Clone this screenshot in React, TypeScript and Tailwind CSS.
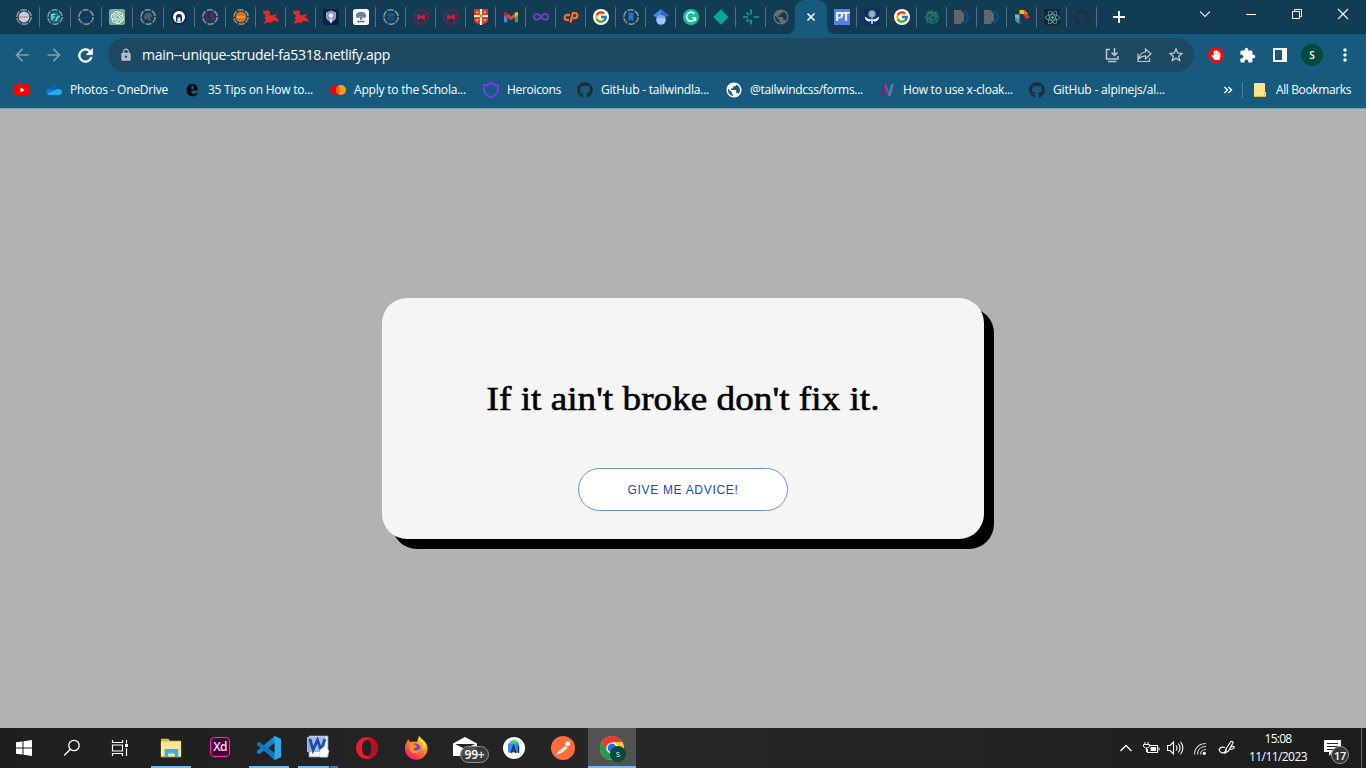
import React, { useLayoutEffect, useRef, useState } from "react";
import { FaGithub, FaReact, FaHandPaper } from "react-icons/fa";
import { FcGoogle } from "react-icons/fc";
import { SiOpenai } from "react-icons/si";
import { MdExtension, MdLock, MdArrowBack, MdArrowForward, MdStarBorder, MdMoreVert, MdPublic } from "react-icons/md";

/** A single line of text fitted to the given width, by letter spacing or by stretching the glyphs. */
function FitText({ text, width, stretch = false, className = "" }: { text: string; width: number; stretch?: boolean; className?: string }) {
  const ref = useRef<HTMLSpanElement>(null);
  const [natural, setNatural] = useState(0);
  useLayoutEffect(() => {
    if (ref.current) setNatural(ref.current.getBoundingClientRect().width);
  }, [text]);
  const style: React.CSSProperties = natural
    ? stretch
      ? { transform: `scaleX(${width / natural})` }
      : { letterSpacing: (width - natural) / text.length }
    : {};
  return (
    <span ref={ref} className={"inline-block whitespace-pre " + className} style={style}>
      {text}
    </span>
  );
}

type IconProps = { children: React.ReactNode; size?: number; box?: number; className?: string };
function Icon({ children, size = 16, box = 16, className = "" }: IconProps) {
  return (
    <svg width={size} height={size} viewBox={`0 0 ${box} ${box}`} fill="none" className={"block shrink-0 " + className}>
      {children}
    </svg>
  );
}

/** Favicon inside the dashed ring of a tab that is waiting to load. */
function Pending({ children }: { children: React.ReactNode }) {
  return (
    <Icon>
      <circle cx="8" cy="8" r="7.2" stroke="#8b979f" strokeWidth="1.5" strokeDasharray="6.2 1.34" />
      {children}
    </Icon>
  );
}

const Runner = () => (
  <Icon>
    <path d="M0 1.500 2.500 2 5 1 7 3 6.500 5.500 9 6.500 15 4.500 11.500 8 14.500 9.500 16 13 10.500 11.500 9 13.500 4 13.500 0 15 3 11 1.500 9 3 7 .5 4.500Z" fill="#e02d2a" />
  </Icon>
);
const RedSeal = () => (
  <Icon>
    <circle cx="8" cy="8" r="7.3" stroke="#8a1f3a" strokeWidth="1" />
    <circle cx="8" cy="8" r="5.8" stroke="#5b2340" strokeWidth="0.9" />
    <path d="M4 5.500h2.500v1.300h3V5.500H12v5H9.500V9.200h-3v1.300H4Z" fill="#d5173a" />
  </Icon>
);
const Bracket = () => (
  <Icon>
    <path d="M0 1h6.500L10 4.500v7L6.500 15H0Z" fill="#626569" />
    <path d="M10.500 1.500 14.500 8l-4 6.500" stroke="#0d4f92" strokeWidth="1.800" />
  </Icon>
);
const GoogleDot = () => (
  <span className="grid size-4 place-items-center rounded-full bg-white">
    <FcGoogle size={14} />
  </span>
);

const leadingTabs: React.ReactNode[] = [
  <Pending><circle cx="8" cy="8" r="5.4" fill="#ccd0d6" /><path d="M3.5 8h9" stroke="#cc6674" strokeWidth="1.6" strokeDasharray="1.5 .7" /></Pending>,
  <Pending><circle cx="8" cy="8" r="5.3" fill="#078487" /><path d="M5 11V5.500h3M5 8h2.500M9 12c0-3 1-4 3.500-5" stroke="#bce3df" strokeWidth="1.1" /></Pending>,
  <Pending><path d="M4 11c1-5 2.500-6 4-6s3 1 4 6L8 8.500Z" fill="#0b4373" /></Pending>,
  <span className="grid size-4 place-items-center rounded-[2px] bg-[#74aa9c] text-white"><SiOpenai size={13} /></span>,
  <Pending><path d="M4 8c0-3 3-5 6-4l2.500 2.500L12 8l-2-.5 1 4.500-3-1V9L5 11Z" fill="#5a5d61" /></Pending>,
  <Icon><circle cx="8" cy="8" r="8" fill="#09265f" /><circle cx="8" cy="8" r="6" fill="#fff" /><path d="M5 12.500V8a3 3 0 0 1 6 0v4.500Z" fill="#0c2b60" /><path d="M6.500 8.500h3v4h-3Z" fill="#fff" /></Icon>,
  <Pending><path d="M4.500 4v7h3M11 5.200c-3-1.500-3.500 2-1 2.500s2 4-1.500 2.800M9 11l1.800-6L12.500 11" stroke="#8b1c51" strokeWidth="1.1" /></Pending>,
  <Pending><circle cx="8" cy="8" r="5.400" fill="#e5700b" /><path d="M4 8h8" stroke="#edc28d" strokeWidth="1.600" strokeDasharray="1.300 .6" /></Pending>,
  <Runner />,
  <Runner />,
  <Icon><rect width="16" height="16" fill="#08204d" /><path d="M3 3.500 8 1.500l5 2v5c0 2-3 3-5 6-2-3-5-4-5-6Z" fill="#9ba9bc" /><circle cx="8" cy="6.500" r="3" fill="#e7ecf1" stroke="#4c648a" strokeWidth=".8" /><path d="M8 9.500v4" stroke="#f3f5f7" strokeWidth="1.500" /></Icon>,
  <Icon><rect width="16" height="16" rx="2.500" fill="#f9fafb" /><path d="M3 7c0-3 2-4 5-4s5 1 5 4c0 2-2 2-4 1.500v2.200H7V8.500C5 9 3 9 3 7Z" fill="#66779a" /><path d="M4.500 5.500h7M5 7.500h6" stroke="#8d9bb5" strokeWidth=".6" /><path d="M4.500 12.600h7" stroke="#34486f" strokeWidth="1.500" strokeDasharray="1.500 .4" /></Icon>,
  <Pending><path d="M4 7c1-3 7-3 8 0M4 9h8M5 11h6M6 5.500l1 2 2-2 1 2" stroke="#275b91" strokeWidth="1.100" /></Pending>,
  <RedSeal />,
  <RedSeal />,
  <Icon><path d="M1 0h14v11c0 3-4 4-7 5-3-1-7-2-7-5Z" fill="#d33b29" /><path d="M8 0v16M1 7h14" stroke="#f8efe0" strokeWidth="2.200" /><path d="M3.200 2.200h2v2h-2ZM10.800 2.200h2v2h-2ZM3.200 10h2v2h-2ZM10.800 10h2v2h-2Z" fill="#f8c03d" /><path d="M6.500 5.500h3v3h-3Z" fill="#e88b31" /></Icon>,
  <Icon><path d="M1 4v9.300h3.300V6Z" fill="#4285f4" /><path d="M11.700 6v7.300H15V4Z" fill="#34a853" /><path d="M4.300 4.500 8 7.300l3.700-2.800v4L8 11.300 4.300 8.500Z" fill="#ea4335" /><path d="M1 4.500C1 2.500 3 2.500 4.300 4v4.500L1 6.200Z" fill="#c5221f" /><path d="M11.700 4C13 2.500 15 2.500 15 4.500v1.700l-3.300 2.300Z" fill="#fbbc04" /></Icon>,
  <Icon><path d="M8 8C6 5.500 5 4.800 3.900 4.800a3 3 0 0 0 0 6C5 10.800 6 10 8 7.800s3-3 4.100-3a3 3 0 0 1 0 6C11 10.800 10 10 8 8Z" stroke="#7340c4" strokeWidth="1.800" /></Icon>,
  <Icon><path d="M7 6H4a2.300 2.300 0 0 0 0 4.800h2" stroke="#ff6c2c" strokeWidth="2.300" /><path d="m7.500 13.500 2.400-9.300h2.300c3.500 0 2.500 5-.8 5H10" stroke="#ff6c2c" strokeWidth="2.300" /></Icon>,
  <GoogleDot />,
  <Pending><path d="M5.500 3.500h5v9L8 10.500l-2.500 2Z" fill="#2d6fce" /></Pending>,
  <Icon><path d="M8 0 0 6.500 8 11Z" fill="#4285f4" /><path d="m8 0 8 6.500L8 11Z" fill="#356ac3" /><circle cx="8" cy="11" r="4.800" fill="#a0c3ff" /><path d="M3.500 9C5 5.500 11 5.500 12.500 9Z" fill="#76a7fa" /></Icon>,
  <Icon><circle cx="8" cy="8" r="8" fill="#13c296" /><path d="M11.500 4.800A4.500 4.500 0 1 0 12.400 9H9.200M12.400 9v3" stroke="#fff" strokeWidth="1.500" /></Icon>,
  <Icon><path d="m8 .3 7.700 7.700L8 15.700.3 8Z" fill="#05a6a0" /></Icon>,
  <Icon><path d="M8 .5v4.700M8 10.800v4.700M0 8h5M10.500 8H16M3.500 12.500 5.800 10.200M3.500 3.500l2.300 2.300" stroke="#05a99f" strokeWidth="1.700" /></Icon>,
  <MdPublic size={18} className="-ml-px text-[#6a6d71]" />,
];

const trailingTabs: React.ReactNode[] = [
  <span className="grid size-4 place-items-center bg-[#557fe7] text-[12px] leading-4 font-bold tracking-[-1px] text-white [font-family:'Liberation_Sans',sans-serif]">PT</span>,
  <Icon><rect width="16" height="16" rx="1" fill="#09315f" /><circle cx="8" cy="5" r="3.800" fill="#7f98b4" /><path d="M5.500 4.500h5M6 6.500h4M8 2v8" stroke="#b6c4d2" strokeWidth=".8" /><path d="M.8 7.500c0 3 2 5 5.200 5l2-1.700 2 1.700c3.200 0 5.200-2 5.200-5l-4 2.500L8 10.500 4.800 10Z" fill="#e8eef4" /><path d="M8 10v5" stroke="#e8eef4" strokeWidth="1.500" /></Icon>,
  <GoogleDot />,
  <Icon><circle cx="8" cy="8" r="7.400" fill="#154c5c" /><path d="M2 5c5-5 10 0 12 4M1 9C5 2 10 3 14 6M2 12C7 5 11 6 15 9M5 14C7 9 12 9 14 12M4 3c6 2 9 5 8 11M9 1c-6 3-7 8-5 13M13 3C7 4 5 9 8 15" stroke="#2b8a50" strokeWidth=".75" /><path d="M1 8c4 0 7 3 9 7M2 11c4 0 5 1 7 4" stroke="#2b67ae" strokeWidth=".8" /></Icon>,
  <Bracket />,
  <Bracket />,
  <Icon><path d="M5.500 1h5v4h-5Z" fill="#fbbc04" /><path d="M10.500 1 16 8.500 12 10l-3-5h1.500Z" fill="#ed2d25" /><path d="M1 5.500h4.500V11L1 8.500Z" fill="#60c7bb" /><path d="M1 9l4.500 2v4L1.500 12Z" fill="#3fa5b4" /><path d="M5.500 11 9 14.500H5.500Z" fill="#851b9b" /><path d="M10.500 1 14 5h-3.500Z" fill="#ff8915" /></Icon>,
  <span className="grid size-4 place-items-center rounded-[2px] bg-[#222427] text-[#55bdd2]"><FaReact size={15} /></span>,
  <FaGithub size={16} className="text-[#22303a]" />,
];

function TabStrip() {
  return (
    <div className="flex h-[34px] bg-[#123b54] pl-[9px]">
      {leadingTabs.map((icon, i) => (
        <div key={i} className={"flex h-[34px] shrink-0 items-center pl-[7px] " + (i < 7 ? "w-[31px]" : "w-[30px]")}>
          {icon}
          {i < leadingTabs.length - 1 && <span className="ml-auto h-5 w-px bg-[#50707f]" />}
        </div>
      ))}
      <div className="relative -ml-px grid w-8 shrink-0 place-items-center rounded-t-[9px] bg-[#175a7e] text-white">
        <Icon size={10} box={10}><path d="m1.500 1.500 7 7M8.500 1.500l-7 7" stroke="#fff" strokeWidth="1.600" /></Icon>
        <Icon size={8} box={8} className="absolute bottom-0 -left-2"><path d="M8 0v8H0a8 8 0 0 0 8-8Z" fill="#175a7e" /></Icon>
        <Icon size={8} box={8} className="absolute -right-2 bottom-0"><path d="M0 0v8h8a8 8 0 0 1-8-8Z" fill="#175a7e" /></Icon>
      </div>
      {trailingTabs.map((icon, i) => (
        <div key={i} className="flex h-[34px] w-[30px] shrink-0 items-center pl-[7px]">
          {icon}
          <span className="ml-auto h-5 w-px bg-[#50707f]" />
        </div>
      ))}
      <div className="ml-3 flex items-center text-white">
        <Icon size={20} box={20}><path d="M10 4v12M4 10h12" stroke="#fff" strokeWidth="2" /></Icon>
      </div>
      <div className="ml-auto flex h-[28px] items-center">
        <div className="grid w-[46px] place-items-center"><Icon size={12} box={12}><path d="M1 3.500 6 8.500l5-5" stroke="#dce5ea" strokeWidth="1.100" /></Icon></div>
        <div className="grid w-[46px] place-items-center"><Icon size={12} box={12}><path d="M1 6.500h10" stroke="#fff" /></Icon></div>
        <div className="grid w-[46px] place-items-center"><Icon size={12} box={12}><path d="M1.500 3.500h7v7h-7ZM3.500 3.500v-2h7v7h-2" stroke="#fff" /></Icon></div>
        <div className="grid w-[46px] place-items-center"><Icon size={12} box={12}><path d="m1 1 10 10M11 1 1 11" stroke="#fff" strokeWidth="1.100" /></Icon></div>
      </div>
    </div>
  );
}

function Toolbar() {
  return (
    <div className="flex h-[42px] items-center pl-3">
      <MdArrowBack size={20} className="shrink-0 text-[#7d9fb3]" />
      <MdArrowForward size={20} className="ml-3 shrink-0 text-[#7d9fb3]" />
      <Icon size={21} box={24} className="ml-[11px]">
        <path d="M17.650 6.350A8 8 0 1 0 19.730 14h-2.080A6 6 0 1 1 16.220 7.780L13 11h7V4Z" fill="#fff" stroke="#fff" strokeWidth=".7" />
      </Icon>
      <div className="ml-[12px] flex h-[34px] w-[1086px] shrink-0 items-center rounded-full bg-[#1c4961] pr-[9px] pl-[11px]">
        <MdLock size={14} className="text-[#b8bec5]" />
        <FitText text="main--unique-strudel-fa5318.netlify.app" width={248} className="ml-[9px] pb-px text-[14px] text-white" />
        <div className="ml-auto flex items-center gap-[14px]">
          <Icon size={18} box={18}><path d="M7 3.500H3.500v9.500h11.500v-3M11.500 2v7M8.500 6.500l3 3 3-3M5 15.500h8.500" stroke="#bdc8ce" strokeWidth="1.500" /></Icon>
          <Icon size={18} box={18}><path d="M3 7.500v8h11.500v-3.500M10.500 3v3C6.500 6.500 4.500 9 4 12.500c2-2 4-2.700 6.500-2.700v3l5.500-5Z" stroke="#bdc8ce" strokeWidth="1.200" /></Icon>
          <MdStarBorder size={18} className="text-[#c5ced3]" />
        </div>
      </div>
      <div className="ml-[14px] grid size-4 shrink-0 place-items-center rounded-full bg-[#ec1010]"><FaHandPaper size={10} className="text-white" /></div>
      <MdExtension size={17} className="ml-[15px] shrink-0 text-white" />
      <Icon size={14} box={14} className="ml-[17px]"><path d="M1 1h12v12H1Z" stroke="#fff" strokeWidth="2" /><path d="M9 1h4v12H9Z" fill="#fff" /></Icon>
      <div className="ml-[14px] grid size-[22px] shrink-0 place-items-center rounded-full bg-[#044b3e] text-[10px] leading-none font-semibold text-white">S</div>
      <MdMoreVert size={20} className="ml-[12px] shrink-0 text-white" />
    </div>
  );
}

const Octocat = () => <FaGithub size={16} className="shrink-0 text-[#232b32]" />;

const bookmarks: { icon: React.ReactNode; label: string; text: number; width: string }[] = [
  { icon: <Icon><rect y="2.300" width="16" height="11.400" rx="3" fill="#f00" /><path d="M6.500 5.500v5L10.700 8Z" fill="#fff" /></Icon>, label: "", text: 0, width: "w-[32px]" },
  { icon: <Icon><path d="M3.500 7a4.300 4.300 0 0 1 8-1.500L15 11H3Z" fill="#0364b8" /><path d="M0 10a3.500 3.500 0 0 1 5-3.200L12 13H3.500A3.200 3.200 0 0 1 0 10Z" fill="#0b78d4" /><path d="M12 7a3.300 3.300 0 0 1 4 4 2.600 2.600 0 0 1-2.500 2H3.500a3.400 3.400 0 0 1-2.500-1L8.500 8Z" fill="#28a8ea" /></Icon>, label: "Photos - OneDrive", text: 98, width: "w-[138px]" },
  { icon: <Icon><path fillRule="evenodd" d="M8.500 2C4.500 2 2.500 4.800 2.500 8.300c0 3.700 2.400 6 5.800 6 2.600 0 4.300-1.300 5.200-3.400l-1-.5c-.6 1.200-1.500 1.800-2.700 1.800-1.800 0-2.600-1.500-2.600-3.700h6.600C13.800 4.700 12 2 8.500 2ZM7.300 7.200C7.300 4.800 7.600 3.300 8.500 3.300s1.200 1.500 1.200 3.900Z" fill="#07090b" /></Icon>, label: "35 Tips on How to...", text: 105, width: "w-[146px]" },
  { icon: <Icon><circle cx="5" cy="8" r="5" fill="#eb001b" /><circle cx="11" cy="8" r="5" fill="#f79e1b" /><path d="M8 4a5 5 0 0 1 0 8 5 5 0 0 1 0-8Z" fill="#ff5f00" /></Icon>, label: "Apply to the Schola...", text: 112, width: "w-[153px]" },
  { icon: <Icon><path d="M8 1C6 2.800 3.500 3.300 1 3.300v3.200C1 11 4 14 8 15.200c4-1.200 7-4.200 7-8.700V3.300C12.500 3.300 10 2.800 8 1Z" stroke="#7c3aed" strokeWidth="1.700" /></Icon>, label: "Heroicons", text: 54, width: "w-[94px]" },
  { icon: <Octocat />, label: "GitHub - tailwindla...", text: 108, width: "w-[149px]" },
  { icon: <MdPublic size={18} className="-mx-px shrink-0 text-white" />, label: "@tailwindcss/forms...", text: 113, width: "w-[153px]" },
  { icon: <Icon><path d="M2.500 14 6 2.500" stroke="#8c1f60" strokeWidth="2.400" /><path d="m6 2.500 4.500 11.300" stroke="#7a5582" strokeWidth="2.400" /><path d="M10.500 13.500 13.500 2" stroke="#5e7eb5" strokeWidth="2.400" /></Icon>, label: "How to use x-cloak...", text: 110, width: "w-[150px]" },
  { icon: <Octocat />, label: "GitHub - alpinejs/al...", text: 112, width: "w-[150px]" },
];

function BookmarksBar() {
  return (
    <div className="flex h-8 items-center pb-[4px] pl-[14px] text-[12px] leading-4 text-white">
      {bookmarks.map((b, i) => (
        <div key={i} className={"flex shrink-0 items-center gap-2 " + b.width}>
          {b.icon}
          {b.label && <FitText text={b.label} width={b.text} />}
        </div>
      ))}
      <Icon size={10} box={10} className="ml-[44px]"><path d="m1.500 2 3 3-3 3M5.500 2l3 3-3 3" stroke="#fff" strokeWidth="1.400" /></Icon>
      <span className="ml-[9px] h-4 w-px bg-[#4d7f9b]" />
      <Icon className="ml-[10px]"><path d="M1 2a1 1 0 0 1 1-1h9a1 1 0 0 1 1 1v8h1v4l-1 1H1Z" fill="#ffe38d" /><path d="M1 14.500h10.500v-4" stroke="#e9bc3c" /></Icon>
      <FitText text="All Bookmarks" width={75} className="ml-[7px]" />
    </div>
  );
}

function AdviceCard() {
  return (
    <main className="flex h-[619px] flex-col items-center bg-[#b2b2b2] pt-[189px]">
      <section className="flex h-[241px] w-[602px] flex-col items-center rounded-[25px] bg-[#f5f5f5] pt-[76px] shadow-[10px_10px_0_#000]">
        <h1 className="h-[48px] text-[34.5px] leading-[48px] text-black [-webkit-text-stroke:0.6px_#000] [font-family:'Liberation_Serif',serif]">
          <FitText text="If it ain't broke don't fix it." width={393} stretch />
        </h1>
        <button className="mt-[46px] h-[43px] w-[210px] rounded-full border border-[#6a91d0] bg-white text-[12px] text-[#174ca8] [font-family:'Liberation_Sans',sans-serif]">
          <FitText text="GIVE ME ADVICE!" width={111} />
        </button>
      </section>
    </main>
  );
}

const apps: { icon: React.ReactNode; bar?: "full" | "inset" | "split" }[] = [
  { bar: "inset", icon: <Icon size={22} box={24}><path d="M1 2h8l2 2h12v18H1Z" fill="#e9b33c" /><path d="M1 5h22v16H1Z" fill="#ffe49a" /><path d="M5 13h15v9h-4v-4H9v4H5Z" fill="#36afe6" /></Icon> },
  { icon: <span className="mb-[3px] grid size-5 place-items-center rounded-[4px] border border-[#ff2bc2] bg-[#450135] text-[12px] leading-none font-semibold tracking-[-0.7px] text-[#ffd9f5]">Xd</span> },
  { bar: "inset", icon: <VscodeMark /> },
  { bar: "split", icon: <Icon size={24} box={24} className="-mt-0.5"><path d="M3 1h19v21H3Z" fill="#f0f4fb" /><path d="M1 2h18v15H1Z" fill="#9dbde6" /><path d="M3 1h19v21H3Z" stroke="#7396cc" strokeWidth=".8" /><path d="m4 4 3 11 4.500-10L15 15l4-11" stroke="#1b4fa6" strokeWidth="2.800" /><path d="m14 15 5-4 4 5-2 6h-7Z" fill="#fff" stroke="#bcd0ea" strokeWidth=".6" /></Icon> },
  { icon: <Icon size={24} box={24}><path fillRule="evenodd" d="M12 1a11 11 0 1 0 0 22 11 11 0 0 0 0-22Zm0 3c3 0 4.500 3.500 4.500 8s-1.500 8-4.500 8-5-3.500-5-8 2-8 5-8Z" fill="#ed1b2e" /><path d="M12 4c2-2.500 5.500-2 7.500 0a11 11 0 0 1 0 16c-2 2-5.500 2.500-7.500 0 3 0 4.500-3.500 4.500-8s-1.500-8-4.500-8Z" fill="#b5101c" /></Icon> },
  { icon: <Firefox /> },
  { icon: <Mail /> },
  { icon: <Icon size={22} box={22}><circle cx="11" cy="11" r="11" fill="#fff" /><path d="M6 7.500a5 4.500 0 0 1 10 0Z" fill="#3ddc84" /><path d="M5 6.500h11v9H5Z" fill="#4285f4" /><path d="m8 16 2.500-7L13 16M15.500 9v7M9 14h3" stroke="#123361" strokeWidth="1.500" /></Icon> },
  { icon: <Icon size={24} box={24}><circle cx="12" cy="12" r="12" fill="#ff6c37" /><path d="m5 19 2.500-3.500 7-6 2.500 2-6 5-3.500 1.500Z" fill="#fff" /><circle cx="16.700" cy="7.700" r="2.400" fill="#fff" /><path d="m8.500 16 7-6" stroke="#ff8e67" strokeWidth=".8" /></Icon> },
  { bar: "full", icon: <Chrome /> },
];

function VscodeMark() {
  return (
    <Icon size={24} box={24}>
      <path d="M17.500 0 24 3v18l-6.500 3L7.300 14.200 2.500 18 0 16.700V15L17.500 0Z" fill="#1684cf" />
      <path d="M0 9V7.300L2.500 6l15 11.500L18 24 0 9Z" fill="#1277be" />
      <path d="M17.500 0 24 3v18l-6.500 3Z" fill="#2ea9ee" />
      <path d="M17.500 7v10L11 12Z" fill="#242424" />
    </Icon>
  );
}

function Firefox() {
  return (
    <svg width="24" height="24" viewBox="0 0 24 24" className="block">
      <defs>
        <linearGradient id="fox" x1=".85" y1="0" x2=".2" y2="1">
          <stop offset="0" stopColor="#fff34a" /><stop offset=".4" stopColor="#ff9326" /><stop offset=".75" stopColor="#ff3f4a" /><stop offset="1" stopColor="#e31587" />
        </linearGradient>
      </defs>
      <path d="M3 6 4 3l2 3 3-.5L13 6l2-6 4 4c3 2 4.500 5 4.500 8.500a11.300 11.300 0 0 1-22.600 0C1 10 1.500 8 3 6Z" fill="url(#fox)" />
      <circle cx="11.500" cy="12.500" r="5" fill="#7048d8" />
      <path d="M6 8c3-1 4 1 7 2-2 1-1 2-4 3 3 3 5 1 8-1-1 7-11 7-12 0Z" fill="#ff9029" />
      <path d="M14.500 2c2 4 6 5 5 12 4-5 1-9-3-11Z" fill="#ffdf3f" />
    </svg>
  );
}

function Mail() {
  return (
    <span className="relative block">
      <Icon size={24} box={24}><path d="M0 7.500 12 1l12 6.500V20H0Z" fill="#fff" /><path d="M2 8h20l-10 5Z" fill="#242424" /></Icon>
      <span className="absolute top-[10px] left-[7px] flex h-[17px] w-[29px] items-center justify-center rounded-full border border-[#929292] bg-[#3d3d3d]/90 text-[12px] leading-none font-semibold tracking-[-0.2px] text-white">99+</span>
    </span>
  );
}

function Chrome() {
  return (
    <span className="relative block">
      <Icon size={24} box={24}>
        <circle cx="12" cy="12" r="12" fill="#fcc934" />
        <path d="M1.600 6a12 12 0 0 1 20.800 0H12v6l-5.200 3Z" fill="#e33b2e" />
        <path d="M1.600 6a12 12 0 0 0 10.400 18l5.200-9-5.200-3-5.200 3Z" fill="#229b4d" />
        <circle cx="12" cy="12" r="5.600" fill="#fff" /><circle cx="12" cy="12" r="4.400" fill="#1a73e8" />
      </Icon>
      <span className="absolute top-[10px] left-[10px] grid size-4 place-items-center rounded-full bg-[#044b3e] text-[8px] leading-none text-white">S</span>
    </span>
  );
}

function Taskbar() {
  return (
    <footer className="flex h-10 items-center bg-[#222222] bg-linear-to-r from-[#1e1e1e] via-[#272727] to-[#1d1d1d]">
      <div className="grid w-12 place-items-center"><Icon><path d="M0 2.300 6.500 1.400v6.100H0ZM7.500 1.200 16 0v7.500H7.500ZM0 8.500h6.500v6.100L0 13.700ZM7.500 8.500H16V16l-8.500-1.200Z" fill="#fff" /></Icon></div>
      <div className="grid w-12 place-items-center"><Icon size={18} box={18}><circle cx="11" cy="6.500" r="5.200" stroke="#fff" strokeWidth="1.300" /><path d="M7.300 10.300 1.200 16.500" stroke="#fff" strokeWidth="1.400" /></Icon></div>
      <div className="grid w-12 place-items-center"><Icon size={18} box={18}><path d="M1.500 1v2.500h10V1M1.500 17v-2.500h10V17M1.500 6h10v6h-10ZM15.500 1v3.500M15.500 9v8" stroke="#fff" strokeWidth="1.200" /><path d="M14 5h3v3h-3Z" fill="#fff" /></Icon></div>
      <div className="ml-[3px] flex gap-px">
        {apps.map((app, i) => (
          <div key={i} className={"flex h-10 w-12 flex-col items-center " + (app.bar === "full" ? "bg-[#525252]" : "")}>
            <div className="grid h-[38px] w-12 place-items-center pt-[2px]">{app.icon}</div>
            {app.bar === "full" && <div className="h-0.5 w-12 bg-[#76b9ed]" />}
            {app.bar === "inset" && <div className="h-0.5 w-10 bg-[#76b9ed]" />}
            {app.bar === "split" && <div className="flex h-0.5 w-10"><span className="w-[31px] bg-[#76b9ed]" /><span className="ml-px flex-1 bg-[#4d7896]" /></div>}
          </div>
        ))}
      </div>
      <div className="ml-auto flex h-10 items-center">
        <Icon size={14} box={14}><path d="M1.500 10 7 4.500l5.500 5.500" stroke="#fff" strokeWidth="1.300" /></Icon>
        <Icon size={17} box={17} className="ml-[10px]"><path d="M6.500 5.500h8v7h-10V9" stroke="#fff" strokeWidth="1.100" /><path d="M7.500 7h5.500v4H7.500Z" fill="#fff" /><path d="M16 7.500v3M2 2v3M5 2v3M.5 4.500h6v2L4.500 8h-2L.5 6.500ZM3.500 8v4" stroke="#fff" strokeWidth="1" /></Icon>
        <Icon size={18} box={18} className="ml-[6px]"><path d="M1.500 6.500H4l3.500-3.500v12L4 11.500H1.500ZM10 6.500q2 2.500 0 5M12.300 4.500q3.500 4.500 0 9M14.600 2.700q4.500 6.300 0 12.600" stroke="#fff" strokeWidth="1.100" /></Icon>
        <Icon size={16} box={16} className="ml-[8px]"><path d="M2.500 14.500C2.500 8 7 3.500 14 3.500M5.500 14.500c0-5 3.500-8 8.500-8M8.500 14.500c0-3 2.500-5 5.500-5" stroke="#ccc" strokeWidth="1.200" /><circle cx="12.300" cy="13.300" r="1.600" fill="#fff" /></Icon>
        <Icon size={18} box={18} className="ml-[10px]"><path d="M7 8.500c-4-1.500-7 1.500-5 4s6 1 6.500-2M7 14l1-4 4.500-7c1-1.300 3-.3 2.300 1.200L10.500 12ZM13 8c2-1 4-.5 3 1s-2.500 1.500-4 1.500" stroke="#fff" strokeWidth="1.200" /></Icon>
        <div className="ml-[13px] flex w-[58px] flex-col items-center text-[12px] leading-[18px] text-white">
          <FitText text="15:08" width={27} />
          <FitText text="11/11/2023" width={58} />
        </div>
        <div className="relative ml-[17px] h-10 w-[37px]">
          <Icon size={18} box={18} className="mt-[11px]"><path d="M0 1h17v12H9l-4 4v-4H0Z" fill="#fff" /><path d="M3 4.500h11M3 7.500h11M3 10.500h7" stroke="#252525" strokeWidth="1.200" /></Icon>
          <span className="absolute top-[18px] left-[7px] grid size-[18px] place-items-center rounded-full border border-[#969696] bg-[#353535] text-[11px] leading-none font-semibold tracking-[-0.4px] text-white">17</span>
        </div>
        <div className="mr-1 h-10 w-px bg-[#626262]" />
      </div>
    </footer>
  );
}

export default function App() {
  return (
    <div className="flex h-[768px] w-[1366px] flex-col overflow-hidden [font-family:'Open_Sans','Noto_Sans',sans-serif]">
      <header className="h-[109px] shrink-0 border-b border-[#799fb3] bg-[#175a7e]">
        <TabStrip />
        <Toolbar />
        <BookmarksBar />
      </header>
      <AdviceCard />
      <Taskbar />
    </div>
  );
}
